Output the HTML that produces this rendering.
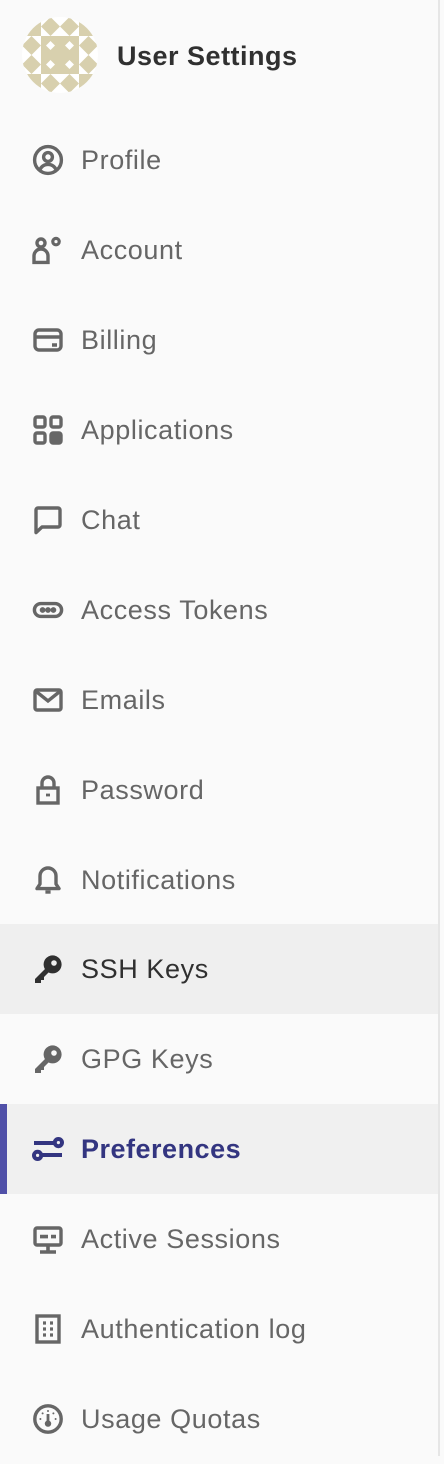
<!DOCTYPE html>
<html><head><meta charset="utf-8"><style>
*{margin:0;padding:0;box-sizing:border-box}
body{width:444px;height:1456px;background:#fafafa;font-family:"Liberation Sans",sans-serif;overflow:hidden;position:relative}
.border{position:absolute;left:438px;top:0;width:2px;height:1456px;background:#e6e6e6}
.head{position:absolute;top:0;left:0;height:112px;width:438px}
.av{position:absolute;left:22px;top:17px;width:76px;height:76px}
.title{position:absolute;left:117px;top:40px;font-size:27px;letter-spacing:0.5px;font-weight:bold;color:#303030;line-height:32px}
.item{position:absolute;left:0;width:438px;height:90px;color:#666;font-size:27px;letter-spacing:0.6px}
.item svg{position:absolute;left:32px;top:29px;width:32px;height:32px;fill:none;stroke:#666;stroke-width:1.7}
.item span{position:absolute;left:81px;top:29px;line-height:32px}
.hover{background:#efefef;color:#303030}
.hover svg{stroke:#303030}
.act{background:#f0f0f0;color:#333580;font-weight:bold;letter-spacing:0.5px}
.act::before{content:"";position:absolute;left:0;top:0;width:7px;height:90px;background:#5050a8}
.act svg{stroke:#333580}
</style></head><body>
<div class="border"></div>
<div class="head">
<svg class="av" viewBox="0 0 76 76"><defs><clipPath id="c"><circle cx="38" cy="38" r="38"/></clipPath></defs>
<g clip-path="url(#c)"><rect width="76" height="76" fill="#fff"/>
<g fill="#d8d0ae">
<rect x="19" y="19" width="38" height="38"/>
<path d="M28.5 0L38 9.5 28.5 19 19 9.5Z M47.5 0L57 9.5 47.5 19 38 9.5Z M28.5 57L38 66.5 28.5 76 19 66.5Z M47.5 57L57 66.5 47.5 76 38 66.5Z M9.5 19L19 28.5 9.5 38 0 28.5Z M9.5 38L19 47.5 9.5 57 0 47.5Z M66.5 19L76 28.5 66.5 38 57 28.5Z M66.5 38L76 47.5 66.5 57 57 47.5Z"/>
<path d="M0 0H19V19H0Z M57 0H76V19H57Z M0 57H19V76H0Z M57 57H76V76H57Z" fill="#fff"/>
<path d="M19 0L19 19 0 19Z M57 0V19H76Z M19 76V57H0Z M57 76V57H76Z"/>
</g>
<g fill="#fff"><path d="M28.5 24L33 28.5 28.5 33 24 28.5Z M47.5 24L52 28.5 47.5 33 43 28.5Z M28.5 43L33 47.5 28.5 52 24 47.5Z M47.5 43L52 47.5 47.5 52 43 47.5Z"/></g>
</g></svg>
<div class="title">User Settings</div>
</div>

<div class="item" style="top:115px"><svg viewBox="0 0 16 16"><circle cx="8" cy="8" r="6.7"/><circle cx="8" cy="6.5" r="2.2"/><path d="M3.8 13c1-2 2.4-2.8 4.2-2.8s3.2.8 4.2 2.8"/></svg><span>Profile</span></div>
<div class="item" style="top:205px"><svg viewBox="0 0 16 16"><circle cx="4.5" cy="4.5" r="2"/><path d="M1 14.2V11a3.5 3.5 0 017 0v3.2Z"/><circle cx="12" cy="3.8" r="2.4" fill="#666" stroke="none"/><circle cx="12" cy="3.8" r="0.8" fill="#fafafa" stroke="none"/></svg><span>Account</span></div>
<div class="item" style="top:295px"><svg viewBox="0 0 16 16"><rect x="1.5" y="3" width="13" height="10" rx="2"/><path d="M1.5 6.5h13M10 10.5h2.5" stroke-width="1.8"/></svg><span>Billing</span></div>
<div class="item" style="top:385px"><svg viewBox="0 0 16 16"><rect x="1.5" y="1.5" width="5" height="5" rx="1"/><rect x="9.5" y="1.5" width="5" height="5" rx="1"/><rect x="1.5" y="9.5" width="5" height="5" rx="1"/><rect x="9.5" y="9.5" width="5" height="5" rx="1" fill="#666"/></svg><span>Applications</span></div>
<div class="item" style="top:475px"><svg viewBox="0 0 16 16"><path d="M2 14.3V3a1 1 0 011-1h10a1 1 0 011 1v7.5a1 1 0 01-1 1H5Z" stroke-linejoin="round"/></svg><span>Chat</span></div>
<div class="item" style="top:565px"><svg viewBox="0 0 16 16"><rect x="1.2" y="4.8" width="13.6" height="6.4" rx="3.2"/><circle cx="5.3" cy="8" r=".6" fill="#666"/><circle cx="8" cy="8" r=".6" fill="#666"/><circle cx="10.7" cy="8" r=".6" fill="#666"/></svg><span>Access Tokens</span></div>
<div class="item" style="top:655px"><svg viewBox="0 0 16 16"><rect x="1.5" y="3" width="13" height="10" rx="1"/><path d="M1.8 3.5 8 8.5l6.2-5"/></svg><span>Emails</span></div>
<div class="item" style="top:745px"><svg viewBox="0 0 16 16"><path d="M5 7V4.5a3 3 0 016 0V7"/><rect x="3" y="7" width="10" height="7.5"/><path d="M7 10.5h2" stroke-width="1.4"/></svg><span>Password</span></div>
<div class="item" style="top:835px"><svg viewBox="0 0 16 16"><path d="M8 2a4 4 0 014 4v4l1.5 2.3h-11L4 10V6a4 4 0 014-4Z" stroke-linejoin="round"/><path d="M6.7 14h2.6"/></svg><span>Notifications</span></div>
<div class="item hover" style="top:924px"><svg viewBox="0 0 16 16"><circle cx="10.3" cy="5.7" r="4.5" fill="#303030" stroke="none"/><circle cx="11" cy="5" r="1.4" fill="#efefef" stroke="none"/><path d="M7 7.5 1.5 13v2h3v-1.5h1.5V12l3-3Z" fill="#303030" stroke="none"/></svg><span>SSH Keys</span></div>
<div class="item" style="top:1014px"><svg viewBox="0 0 16 16"><circle cx="10.3" cy="5.7" r="4.5" fill="#666" stroke="none"/><circle cx="11" cy="5" r="1.4" fill="#fafafa" stroke="none"/><path d="M7 7.5 1.5 13v2h3v-1.5h1.5V12l3-3Z" fill="#666" stroke="none"/></svg><span>GPG Keys</span></div>
<div class="item act" style="top:1104px"><svg viewBox="0 0 16 16" style="stroke-width:2"><path d="M1 5h10M5 11h10"/><circle cx="13.2" cy="4.8" r="1.8"/><circle cx="2.8" cy="11.2" r="1.8"/></svg><span>Preferences</span></div>
<div class="item" style="top:1194px"><svg viewBox="0 0 16 16"><rect x="1.5" y="2.5" width="13" height="8.5" rx="1"/><path d="M4 6.8h4M9.5 6.8h2.5M8 11v3M4 14.5h8" stroke-width="1.8"/></svg><span>Active Sessions</span></div>
<div class="item" style="top:1284px"><svg viewBox="0 0 16 16"><rect x="2.5" y="1.5" width="11" height="13"/><path d="M5.5 5h1.5M9 5h1.5M5.5 8h1.5M9 8h1.5M5.5 11h1.5M9 11h1.5" stroke-width="1.6"/></svg><span>Authentication log</span></div>
<div class="item" style="top:1374px"><svg viewBox="0 0 16 16"><circle cx="8" cy="8" r="6.6"/><circle cx="8" cy="10.3" r="1.6" fill="#666" stroke="none"/><path d="M8 5.5v4" stroke-width="1.4"/><circle cx="4.2" cy="8" r=".5" fill="#666" stroke="none"/><circle cx="11.8" cy="8" r=".5" fill="#666" stroke="none"/><circle cx="5.3" cy="5.2" r=".5" fill="#666" stroke="none"/><circle cx="10.7" cy="5.2" r=".5" fill="#666" stroke="none"/><circle cx="8" cy="4" r=".5" fill="#666" stroke="none"/></svg><span>Usage Quotas</span></div>
</body></html>
